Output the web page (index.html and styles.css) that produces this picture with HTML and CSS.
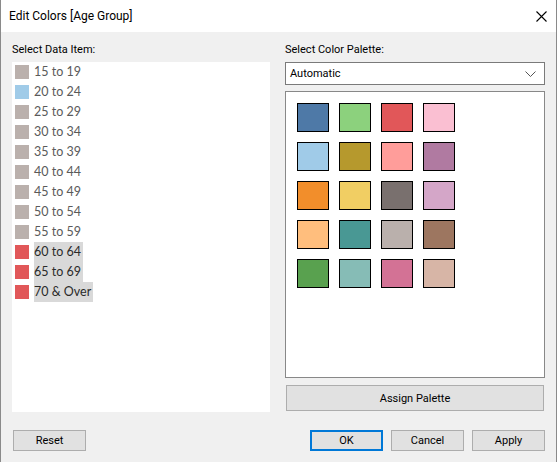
FILE: index.html
```html
<!DOCTYPE html>
<html>
<head>
<meta charset="utf-8">
<link rel="stylesheet" href="styles.css">
</head>
<body>
<div class="window">
  <div class="titlebar">
    <span class="title">Edit Colors [Age Group]</span>
    <svg class="close" width="11" height="11" viewBox="0 0 11 11"><path d="M0.5 0.5 L10.5 10.5 M10.5 0.5 L0.5 10.5" stroke="#000" stroke-width="1.1" fill="none"/></svg>
  </div>
  <div class="content">
    <div class="columns">
      <div class="col-left">
        <div class="label">Select Data Item:</div>
        <div class="list">
          <div class="item"><span class="sw" style="background:#bab0ac"></span><span class="txt">15 to 19</span></div>
          <div class="item"><span class="sw" style="background:#a0cbe8"></span><span class="txt">20 to 24</span></div>
          <div class="item"><span class="sw" style="background:#bab0ac"></span><span class="txt">25 to 29</span></div>
          <div class="item"><span class="sw" style="background:#bab0ac"></span><span class="txt">30 to 34</span></div>
          <div class="item"><span class="sw" style="background:#bab0ac"></span><span class="txt">35 to 39</span></div>
          <div class="item"><span class="sw" style="background:#bab0ac"></span><span class="txt">40 to 44</span></div>
          <div class="item"><span class="sw" style="background:#bab0ac"></span><span class="txt">45 to 49</span></div>
          <div class="item"><span class="sw" style="background:#bab0ac"></span><span class="txt">50 to 54</span></div>
          <div class="item"><span class="sw" style="background:#bab0ac"></span><span class="txt">55 to 59</span></div>
          <div class="item sel"><span class="sw" style="background:#e15759"></span><span class="txt">60 to 64</span></div>
          <div class="item sel"><span class="sw" style="background:#e15759"></span><span class="txt">65 to 69</span></div>
          <div class="item sel"><span class="sw" style="background:#e15759"></span><span class="txt">70 &amp; Over</span></div>
        </div>
      </div>
      <div class="col-right">
        <div class="label">Select Color Palette:</div>
        <div class="select">
          <span>Automatic</span>
          <svg class="chev" width="11" height="6" viewBox="0 0 11 6"><path d="M0.5 0.5 L5.5 5.5 L10.5 0.5" stroke="#555" stroke-width="1" fill="none"/></svg>
        </div>
        <div class="palette">
          <div class="grid">
            <span class="cs" style="background:#4e79a7"></span>
            <span class="cs" style="background:#8cd17d"></span>
            <span class="cs" style="background:#e15759"></span>
            <span class="cs" style="background:#fabfd2"></span>
            <span class="cs" style="background:#a0cbe8"></span>
            <span class="cs" style="background:#b6992d"></span>
            <span class="cs" style="background:#ff9d9a"></span>
            <span class="cs" style="background:#b07aa1"></span>
            <span class="cs" style="background:#f28e2b"></span>
            <span class="cs" style="background:#f1ce63"></span>
            <span class="cs" style="background:#79706e"></span>
            <span class="cs" style="background:#d4a6c8"></span>
            <span class="cs" style="background:#ffbe7d"></span>
            <span class="cs" style="background:#499894"></span>
            <span class="cs" style="background:#bab0ac"></span>
            <span class="cs" style="background:#9d7660"></span>
            <span class="cs" style="background:#59a14f"></span>
            <span class="cs" style="background:#86bcb6"></span>
            <span class="cs" style="background:#d37295"></span>
            <span class="cs" style="background:#d7b5a6"></span>
          </div>
        </div>
        <button class="btn assign">Assign Palette</button>
      </div>
    </div>
    <div class="footer">
      <button class="btn small">Reset</button>
      <div class="spacer"></div>
      <button class="btn small ok">OK</button>
      <button class="btn small">Cancel</button>
      <button class="btn small">Apply</button>
    </div>
  </div>
</div>
</body>
</html>
```

FILE: styles.css
```css
* { box-sizing: border-box; }
html, body { margin: 0; padding: 0; }
body {
  width: 557px;
  height: 462px;
  background: #f0f0f0;
  font-family: Roboto, "Noto Sans", sans-serif;
  font-size: 11px;
  color: #000;
  overflow: hidden;
}
.window {
  width: 557px;
  height: 462px;
  border-left: 1px solid #8a8a8a;
  border-right: 1px solid #8a8a8a;
  display: flex;
  flex-direction: column;
  background: #f0f0f0;
}
.titlebar {
  height: 32px;
  background: #fff;
  display: flex;
  align-items: center;
  padding-left: 8px;
  padding-right: 9px;
  flex: none;
}
.title {
  flex: 1;
  font-size: 12px;
  line-height: 16px;
}
.close { display: block; }
.content {
  flex: 1;
  display: flex;
  flex-direction: column;
  padding: 10px 11px 11px 11px;
}
.columns {
  display: flex;
  gap: 15px;
}
.col-left { width: 258px; display: flex; flex-direction: column; }
.col-right { width: 260px; display: flex; flex-direction: column; }
.label {
  line-height: 16px;
  height: 16px;
  margin-bottom: 4px;
}
.list {
  background: #fff;
  height: 350px;
  padding: 0 0 0 3px;
}
.item {
  height: 20px;
  display: flex;
  align-items: center;
  gap: 5px;
  font-family: Lato, "Noto Sans", sans-serif;
  font-size: 12.5px;
  color: #5a5a5a;
}
.sw {
  width: 14px;
  height: 14px;
  flex: none;
}
.txt {
  height: 20px;
  line-height: 20px;
  padding-right: 2px;
}
.item.sel .txt { background: #d9d9d9; color: #2a2a2a; }
.select {
  height: 23px;
  background: #fff;
  border: 1px solid #7a7a7a;
  display: flex;
  align-items: center;
  padding: 0 4px;
  justify-content: space-between;
}
.chev { margin-right: 4px; }
.palette {
  margin-top: 6px;
  height: 287px;
  background: #fff;
  border: 1px solid #888;
  padding: 11px 0 0 11px;
}
.grid {
  display: grid;
  grid-template-columns: repeat(4, 32px);
  grid-auto-rows: 29px;
  gap: 10px;
}
.cs {
  border: 1px solid #000;
  display: block;
}
.btn {
  font-family: Roboto, "Noto Sans", sans-serif;
  font-size: 11px;
  background: #e1e1e1;
  border: 1px solid #adadad;
  color: #000;
  padding: 0;
  margin: 0;
  border-radius: 0;
}
.assign {
  margin-top: 7px;
  margin-left: 1px;
  width: 258px;
  height: 26px;
}
.footer {
  margin-top: auto;
  display: flex;
  align-items: center;
  gap: 8px;
  padding-left: 1px;
}
.spacer { flex: 1; }
.small { width: 73px; height: 21px; }
.ok { border: 2px solid #0078d7; }
```
